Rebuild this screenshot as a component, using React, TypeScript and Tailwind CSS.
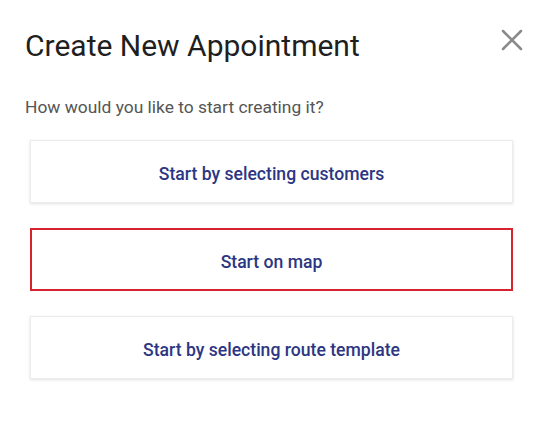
import { X } from "lucide-react";

const options = [
  { label: "Start by selecting customers", selected: false },
  { label: "Start on map", selected: true },
  { label: "Start by selecting route template", selected: false },
];

export default function App() {
  return (
    <div className="w-[545px] h-[429px] bg-white font-['Roboto',sans-serif]">
      {/* Header */}
      <div className="flex items-start justify-between pl-[25px] pr-[15px] pt-[28px]">
        <h1 className="text-[30px] leading-[36px] font-normal text-[#1f1f1f]">
          Create New Appointment
        </h1>
        <button className="-mt-[6px] text-[#8a8a8a]">
          <X className="w-[36px] h-[36px]" strokeWidth={1.7} />
        </button>
      </div>

      <p className="mt-[31px] pl-[25px] text-[17.4px] leading-[24px] text-[#555555]">
        How would you like to start creating it?
      </p>

      {/* Options */}
      <div className="mt-[21px] flex flex-col gap-[25px] pl-[30px] pr-[32px]">
        {options.map((o) => (
          <button
            key={o.label}
            className={
              o.selected
                ? "h-[63px] w-full pt-[5px] bg-white border-2 border-[#d7232e] text-[17.6px] font-medium text-[#2d3683]"
                : "h-[63px] w-full pt-[5px] bg-white border border-[#ececec] shadow-[0_1px_3px_rgba(0,0,0,0.12)] text-[17.6px] font-medium text-[#2d3683]"
            }
          >
            {o.label}
          </button>
        ))}
      </div>
    </div>
  );
}
